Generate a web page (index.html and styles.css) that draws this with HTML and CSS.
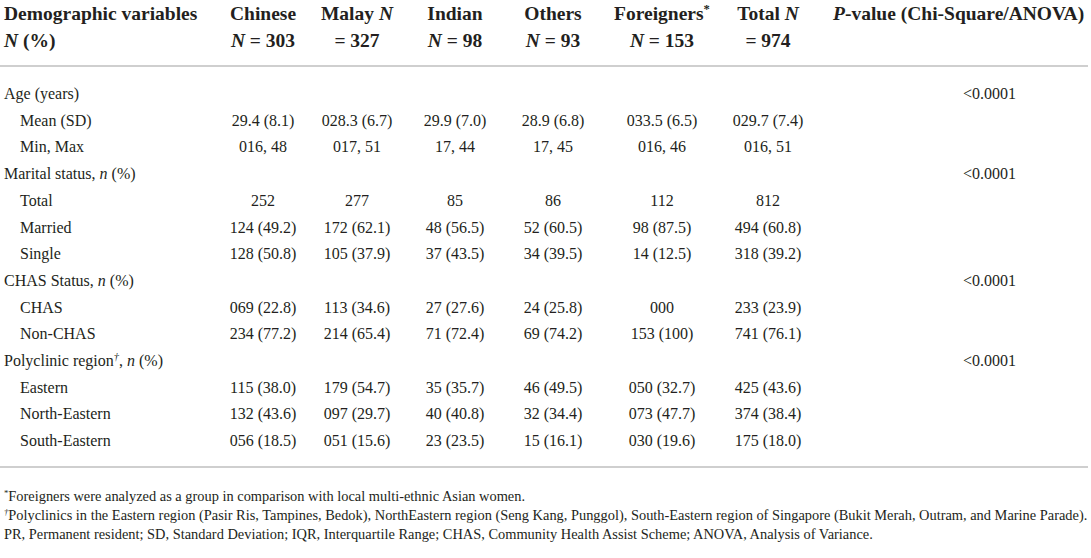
FILE: index.html
```html
<!DOCTYPE html>
<html lang="en">
<head>
    <meta charset="UTF-8">
    <meta name="viewport" content="width=device-width, initial-scale=1.0">
    <title>Demographic variables</title>
    <link rel="stylesheet" href="styles.css">
</head>
<body>
    <div class="table-wrap">
        <table class="demo-table">
            <colgroup>
                <col class="col-label">
                <col class="col-chinese">
                <col class="col-malay">
                <col class="col-indian">
                <col class="col-others">
                <col class="col-foreign">
                <col class="col-total">
                <col class="col-p">
            </colgroup>
            <thead>
                <tr>
                    <th class="label">Demographic variables<br><i>N</i> (%)</th>
                    <th>Chinese<br><i>N</i> = 303</th>
                    <th>Malay <i>N</i><br>= 327</th>
                    <th>Indian<br><i>N</i> = 98</th>
                    <th>Others<br><i>N</i> = 93</th>
                    <th>Foreigners<sup>*</sup><br><i>N</i> = 153</th>
                    <th>Total <i>N</i><br>= 974</th>
                    <th class="pval"><i>P</i>-value (Chi-Square/ANOVA)</th>
                </tr>
            </thead>
            <tbody>
                <tr class="first">
                    <td class="label">Age (years)</td>
                    <td></td><td></td><td></td><td></td><td></td><td></td>
                    <td class="pval">&lt;0.0001</td>
                </tr>
                <tr>
                    <td class="label sub">Mean (SD)</td>
                    <td>29.4 (8.1)</td><td>028.3 (6.7)</td><td>29.9 (7.0)</td><td>28.9 (6.8)</td><td>033.5 (6.5)</td><td>029.7 (7.4)</td>
                    <td class="pval"></td>
                </tr>
                <tr>
                    <td class="label sub">Min, Max</td>
                    <td>016, 48</td><td>017, 51</td><td>17, 44</td><td>17, 45</td><td>016, 46</td><td>016, 51</td>
                    <td class="pval"></td>
                </tr>
                <tr>
                    <td class="label">Marital status, <i>n</i> (%)</td>
                    <td></td><td></td><td></td><td></td><td></td><td></td>
                    <td class="pval">&lt;0.0001</td>
                </tr>
                <tr>
                    <td class="label sub">Total</td>
                    <td>252</td><td>277</td><td>85</td><td>86</td><td>112</td><td>812</td>
                    <td class="pval"></td>
                </tr>
                <tr>
                    <td class="label sub">Married</td>
                    <td>124 (49.2)</td><td>172 (62.1)</td><td>48 (56.5)</td><td>52 (60.5)</td><td>98 (87.5)</td><td>494 (60.8)</td>
                    <td class="pval"></td>
                </tr>
                <tr>
                    <td class="label sub">Single</td>
                    <td>128 (50.8)</td><td>105 (37.9)</td><td>37 (43.5)</td><td>34 (39.5)</td><td>14 (12.5)</td><td>318 (39.2)</td>
                    <td class="pval"></td>
                </tr>
                <tr>
                    <td class="label">CHAS Status, <i>n</i> (%)</td>
                    <td></td><td></td><td></td><td></td><td></td><td></td>
                    <td class="pval">&lt;0.0001</td>
                </tr>
                <tr>
                    <td class="label sub">CHAS</td>
                    <td>069 (22.8)</td><td>113 (34.6)</td><td>27 (27.6)</td><td>24 (25.8)</td><td>000</td><td>233 (23.9)</td>
                    <td class="pval"></td>
                </tr>
                <tr>
                    <td class="label sub">Non-CHAS</td>
                    <td>234 (77.2)</td><td>214 (65.4)</td><td>71 (72.4)</td><td>69 (74.2)</td><td>153 (100)</td><td>741 (76.1)</td>
                    <td class="pval"></td>
                </tr>
                <tr>
                    <td class="label">Polyclinic region<sup class="dag">&dagger;</sup>, <i>n</i> (%)</td>
                    <td></td><td></td><td></td><td></td><td></td><td></td>
                    <td class="pval">&lt;0.0001</td>
                </tr>
                <tr>
                    <td class="label sub">Eastern</td>
                    <td>115 (38.0)</td><td>179 (54.7)</td><td>35 (35.7)</td><td>46 (49.5)</td><td>050 (32.7)</td><td>425 (43.6)</td>
                    <td class="pval"></td>
                </tr>
                <tr>
                    <td class="label sub">North-Eastern</td>
                    <td>132 (43.6)</td><td>097 (29.7)</td><td>40 (40.8)</td><td>32 (34.4)</td><td>073 (47.7)</td><td>374 (38.4)</td>
                    <td class="pval"></td>
                </tr>
                <tr class="last">
                    <td class="label sub">South-Eastern</td>
                    <td>056 (18.5)</td><td>051 (15.6)</td><td>23 (23.5)</td><td>15 (16.1)</td><td>030 (19.6)</td><td>175 (18.0)</td>
                    <td class="pval"></td>
                </tr>
            </tbody>
        </table>

        <div class="notes">
            <p><sup>*</sup>Foreigners were analyzed as a group in comparison with local multi-ethnic Asian women.</p>
            <p><sup class="dag">&dagger;</sup>Polyclinics in the Eastern region (Pasir Ris, Tampines, Bedok), NorthEastern region (Seng Kang, Punggol), South-Eastern region of Singapore (Bukit Merah, Outram, and Marine Parade).</p>
            <p>PR, Permanent resident; SD, Standard Deviation; IQR, Interquartile Range; CHAS, Community Health Assist Scheme; ANOVA, Analysis of Variance.</p>
        </div>
    </div>
</body>
</html>
```

FILE: styles.css
```css
body {
    margin: 0;
    padding: 0;
    background-color: #ffffff;
    color: #231f20;
    font-family: "Liberation Serif", "Times New Roman", serif;
}

.table-wrap {
    width: 1088px;
}

.demo-table {
    width: 1088px;
    border-collapse: collapse;
    table-layout: fixed;
}

/* column widths */
.col-label { width: 216px; }
.col-chinese { width: 94px; }
.col-malay { width: 94px; }
.col-indian { width: 102px; }
.col-others { width: 94px; }
.col-foreign { width: 124px; }
.col-total { width: 88px; }
.col-p { width: 276px; }

.demo-table th {
    font-size: 19.5px;
    font-weight: bold;
    line-height: 27px;
    text-align: center;
    vertical-align: top;
    padding: 0 0 11px 0;
    border-bottom: 2px solid #cfcfcf;
    white-space: nowrap;
}

.demo-table th.label {
    text-align: left;
    padding-left: 4px;
}

.demo-table th.pval {
    text-align: left;
    padding-left: 21px;
}

.demo-table sup {
    font-size: 0.65em;
    line-height: 0;
    vertical-align: 0.55em;
}

.demo-table sup.dag,
.notes sup.dag {
    font-style: italic;
}

.demo-table td {
    font-size: 16px;
    line-height: 26.7px;
    height: 26.7px;
    padding: 0;
    text-align: center;
    white-space: nowrap;
}

.demo-table td.label {
    text-align: left;
    padding-left: 4px;
}

.demo-table td.sub {
    padding-left: 20px;
}

.demo-table td.pval {
    text-align: left;
    padding-left: 151px;
}

.demo-table tr.first td {
    padding-top: 14px;
}

.demo-table tr.last td {
    padding-bottom: 11px;
    border-bottom: 2px solid #cfcfcf;
}

.notes {
    padding: 19px 0 0 4px;
    font-size: 14.4px;
    line-height: 19px;
}

.notes p {
    margin: 0;
    white-space: nowrap;
}

.notes sup {
    font-size: 0.6em;
    line-height: 0;
    vertical-align: 0.6em;
}
```
